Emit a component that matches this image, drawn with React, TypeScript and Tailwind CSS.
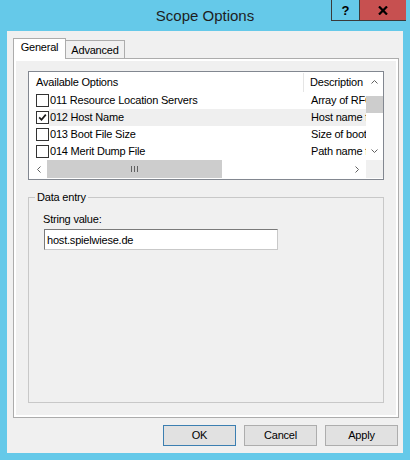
const FONT = "font-['Liberation_Sans',Arial,sans-serif]";

const options = [
  { name: '011 Resource Location Servers', desc: 'Array of RFC 887', checked: false },
  { name: '012 Host Name', desc: 'Host name for', checked: true },
  { name: '013 Boot File Size', desc: 'Size of boot image', checked: false },
  { name: '014 Merit Dump File', desc: 'Path name for', checked: false },
];

function Arrow({ dir }: { dir: 'up' | 'down' | 'left' | 'right' }) {
  const pts: Record<string, string> = {
    up: '0.5,4.5 3.5,1.5 6.5,4.5',
    down: '0.5,0.5 3.5,3.5 6.5,0.5',
    left: '4.5,0.5 1.5,3.5 4.5,6.5',
    right: '0.5,0.5 3.5,3.5 0.5,6.5',
  };
  const horiz = dir === 'left' || dir === 'right';
  return (
    <svg width={horiz ? 5 : 7} height={horiz ? 7 : 5} viewBox={horiz ? '0 0 5 7' : '0 0 7 5'}>
      <polyline points={pts[dir]} fill="none" stroke="#606060" strokeWidth="1" />
    </svg>
  );
}

function Checkbox({ checked }: { checked: boolean }) {
  return (
    <div className="w-[13px] h-[13px] shrink-0 border border-[#333333] bg-white flex items-center justify-center">
      {checked && (
        <svg width="9" height="9" viewBox="0 0 9 9">
          <path d="M1.2 4.3 L3.5 6.8 L7.8 1.6" fill="none" stroke="#1a1a1a" strokeWidth="1.7" />
        </svg>
      )}
    </div>
  );
}

function TitleBar() {
  return (
    <div className="grid grid-cols-[1fr_auto_1fr] h-[31px] shrink-0">
      <div />
      <div className="text-[15px] leading-[31px] text-[#1e1e1e]">Scope Options</div>
      <div className="flex justify-end items-start pr-[4px]">
        <div className="w-[29px] h-[21px] border-l border-r border-b border-[#3a3a3a] flex items-center justify-center text-[13px] font-bold leading-none pt-px">
          ?
        </div>
        <div className="w-[46px] h-[21px] bg-[#c75050] border-b border-[#3a3a3a] flex items-center justify-center">
          <svg width="10" height="9" viewBox="0 0 10 9">
            <path d="M1 0.5 L9 8.5 M9 0.5 L1 8.5" stroke="#000" strokeWidth="2.2" />
          </svg>
        </div>
      </div>
    </div>
  );
}

function OptionsList() {
  return (
    <div className="h-[109px] shrink-0 border border-[#828790] bg-white pl-px py-px grid grid-cols-[1fr_17px] grid-rows-[87px_1fr]">
      <div className="overflow-hidden">
        <div className="flex h-[19px] items-center whitespace-nowrap">
          <div className="w-[274px] shrink-0 h-full border-r border-[#e5e5e5] pl-[6px] flex items-center">Available Options</div>
          <div className="pl-[6px]">Description</div>
        </div>
        {options.map((o) => (
          <div key={o.name} className="flex h-[17px] items-center pl-[6px] whitespace-nowrap">
            <Checkbox checked={o.checked} />
            <div className={`flex-1 h-full flex items-center ${o.checked ? 'bg-[#efefef]' : ''}`}>
              <span className="w-[255px] shrink-0 pl-[1px]">{o.name}</span>
              <span className="pl-[7px] w-[62px] overflow-hidden">{o.desc}</span>
            </div>
          </div>
        ))}
      </div>
      <div className="flex flex-col bg-white">
        <div className="h-[17px] flex items-center justify-center">
          <Arrow dir="up" />
        </div>
        <div className="flex-1">
          <div className="mt-[6px] h-[17px] bg-[#cdcdcd]" />
        </div>
        <div className="h-[17px] flex items-center justify-center">
          <Arrow dir="down" />
        </div>
      </div>
      <div className="flex bg-white">
        <div className="w-[17px] flex items-center justify-center">
          <Arrow dir="left" />
        </div>
        <div className="w-[175px] bg-[#cdcdcd] flex items-center justify-center gap-[2px]">
          <div className="w-px h-[6px] bg-[#606060]" />
          <div className="w-px h-[6px] bg-[#606060]" />
          <div className="w-px h-[6px] bg-[#606060]" />
        </div>
        <div className="flex-1" />
        <div className="w-[17px] flex items-center justify-center">
          <Arrow dir="right" />
        </div>
      </div>
      <div className="bg-[#f0f0f0]" />
    </div>
  );
}

function DataEntry() {
  return (
    <fieldset className="mt-[11px] flex-1 border border-[#c8c8c8]">
      <legend className="ml-[6px] px-[2px] leading-[13px]">Data entry</legend>
      <div className="pl-[14px] pt-[9px]">
        <div className="leading-[13px]">String value:</div>
        <input
          readOnly
          defaultValue="host.spielwiese.de"
          className="mt-[3px] ml-px w-[234px] h-[21px] border border-t-[#7a7a7a] border-l-[#7a7a7a] border-r-[#c9c9c9] border-b-[#c9c9c9] bg-white pl-[2px] outline-none text-[11px] tracking-[-0.2px]"
        />
      </div>
    </fieldset>
  );
}

function Button({ label, primary }: { label: string; primary?: boolean }) {
  return (
    <button
      className={`w-[73px] h-[21px] border bg-[#e1e1e1] ${primary ? 'border-[#3c7fb1]' : 'border-[#adadad]'}`}
    >
      {label}
    </button>
  );
}

export default function App() {
  return (
    <div className={`w-[410px] h-[460px] bg-[#65c9e9] flex flex-col text-black ${FONT}`}>
      <TitleBar />
      <div className="mx-[7px] h-[422px] bg-[#f0f0f0] flex flex-col pt-[7px] pl-[6px] pr-[4px] text-[11px] tracking-[-0.2px]">
        <div className="flex items-end">
          <div className="relative z-10 -mb-px w-[53px] h-[21px] border border-b-0 border-[#acacac] bg-white text-center pt-[2px] leading-[13px]">
            General
          </div>
          <div className="w-[59px] h-[18px] border border-l-0 border-b-0 border-[#acacac] bg-[#f0f0f0] text-center pt-[2px] leading-[14px]">
            Advanced
          </div>
        </div>
        <div className="w-[386px] h-[360px] border border-[#acacac] bg-white p-[2px] flex">
          <div className="flex-1 bg-[#f0f0f0] flex flex-col px-[12px] pt-[10px] pb-[12px]">
            <OptionsList />
            <DataEntry />
          </div>
        </div>
        <div className="flex justify-end gap-[8px] mt-[7px] pr-px">
          <Button label="OK" primary />
          <Button label="Cancel" />
          <Button label="Apply" />
        </div>
      </div>
    </div>
  );
}
